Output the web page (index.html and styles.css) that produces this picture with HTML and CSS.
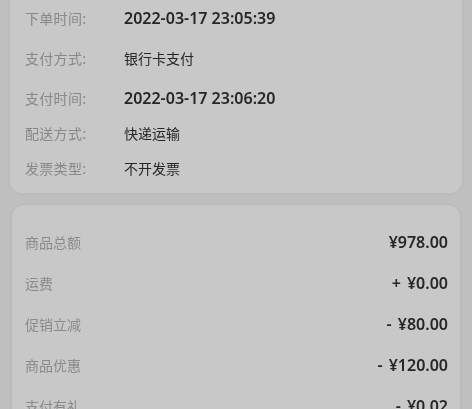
FILE: index.html
```html
<!DOCTYPE html>
<html lang="zh-CN">
<head>
<meta charset="utf-8">
<title>订单详情</title>
<link rel="stylesheet" href="styles.css">
</head>
<body>
<div class="page">
  <section class="card info">
    <div class="row"><span class="label">下单时间:</span><span class="value num">2022-03-17 23:05:39</span></div>
    <div class="row gap-l"><span class="label">支付方式:</span><span class="value">银行卡支付</span></div>
    <div class="row gap-l"><span class="label">支付时间:</span><span class="value num">2022-03-17 23:06:20</span></div>
    <div class="row"><span class="label">配送方式:</span><span class="value">快递运输</span></div>
    <div class="row"><span class="label">发票类型:</span><span class="value">不开发票</span></div>
  </section>
  <section class="card totals">
    <div class="trow"><span class="label">商品总额</span><span class="amount">¥978.00</span></div>
    <div class="trow"><span class="label">运费</span><span class="amount">+ ¥0.00</span></div>
    <div class="trow"><span class="label">促销立减</span><span class="amount">- ¥80.00</span></div>
    <div class="trow"><span class="label">商品优惠</span><span class="amount">- ¥120.00</span></div>
    <div class="trow"><span class="label">支付有礼</span><span class="amount">- ¥0.02</span></div>
  </section>
</div>
</body>
</html>
```
FILE: styles.css
```css
html, body {
  margin: 0;
  padding: 0;
  background: #bfbfbf;
  overflow: hidden;
}
body {
  font-family: "Noto Sans CJK SC", "Noto Sans", sans-serif;
  width: 472px;
  height: 409px;
}
.page {
  display: flex;
  flex-direction: column;
  padding: 0 10px;
  gap: 12px;
  filter: blur(0.55px);
}
.card {
  background: #c8c8c8;
  border-radius: 12px;
  box-shadow: 0 0 4px rgba(0,0,0,0.06);
}
.info {
  margin-top: -14px;
  padding: 22px 15px 15px;
}
.row {
  display: flex;
  align-items: center;
  height: 20px;
  margin-top: 15px;
}
.row:first-child { margin-top: 0; }
.row.gap-l { margin-top: 20px; }
.label {
  font-size: 14px;
  color: #888888;
  line-height: 20px;
}
.info .label { width: 99px; flex: none; letter-spacing: 0.3px; }
.value {
  font-size: 14px;
  color: #262626;
  line-height: 20px;
}
.num {
  font-family: "Noto Sans", "Noto Sans CJK SC", sans-serif;
  font-weight: 600;
  font-size: 16px;
}
.totals {
  margin: 0 2px;
  padding: 27px 12px 20px 13px;
  display: flex;
  flex-direction: column;
  gap: 21px;
}
.trow {
  display: flex;
  justify-content: space-between;
  align-items: center;
  height: 20px;
}
.totals .label { font-size: 14px; color: #8a8a8a; }
.amount {
  font-family: "Noto Sans", "Noto Sans CJK SC", sans-serif;
  font-size: 16px;
  font-weight: 600;
  color: #262626;
  line-height: 20px;
  word-spacing: 2px;
}
```
